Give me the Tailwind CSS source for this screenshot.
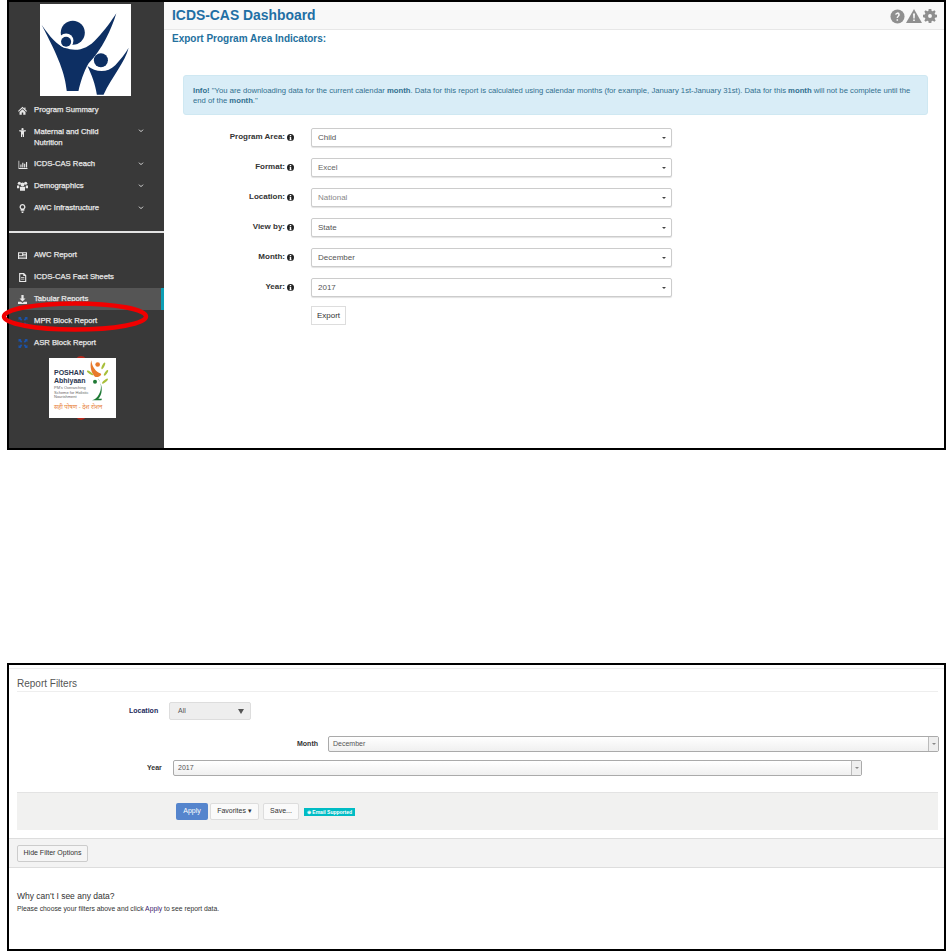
<!DOCTYPE html>
<html lang="en">
<head>
  <meta charset="UTF-8"/>
  <meta name="viewport" content="width=device-width, initial-scale=1.0"/>
  <title>ICDS-CAS Dashboard</title>
  <script src="https://cdn.jsdelivr.net/npm/@tailwindcss/browser@4"></script>
</head>
<body class="bg-white font-['Liberation_Sans',Arial,sans-serif] w-[947px] h-[952px] overflow-hidden">

  <!-- dashboard screenshot -->
  <section class="relative ml-[7px] w-[939px] h-[450px] border-2 border-black flex">
    <aside class="w-[155px] shrink-0 bg-[#393939] text-[#e8e8e8] text-[7.7px] [-webkit-text-stroke:0.25px_#e8e8e8]">
      <div class="mt-[2px] ml-[31px] w-[91px] h-[92px] bg-white">
        <svg viewBox="120 12 272 275" class="w-full h-full" fill="#0d2f63">
          <path d="M125 75C150 110 170 135 195 143C225 155 260 150 290 115C315 90 335 60 348 40C335 85 305 150 265 190C250 215 240 250 235 272L200 272C195 220 175 170 125 75Z"/>
          <circle cx="218" cy="98" r="36"/>
          <circle cx="198" cy="122" r="22" fill="#fff"/>
          <circle cx="198" cy="125" r="15"/>
          <circle cx="302" cy="180" r="21"/>
          <path d="M262 197C285 215 320 220 345 195C360 180 375 160 385 143C375 185 335 230 310 283L290 283C285 250 275 225 262 197Z"/>
        </svg>
      </div>

      <nav class="mt-[3px]">
        <a class="flex items-center h-[22px] pl-[8px]">
          <svg viewBox="0 0 12 12" class="w-[9px] h-[9px] mr-[7px] ml-[1px]" fill="#e8e8e8"><path d="M6 1 0 6.500l1 1L6 3l5 4.500 1-1-2-1.900V2H8.500v1.300zM2 8v3.500h3V8.500h2v3h3V8L6 4.200z"/></svg>
          Program Summary
        </a>
        <a class="flex items-start h-[32px] pl-[8px] pt-[6px] leading-[10.5px] relative">
          <svg viewBox="0 0 12 12" class="w-[9px] h-[9px] mr-[7px] ml-[1px] mt-[1px]" fill="#e8e8e8"><circle cx="6" cy="1.500" r="1.500"/><path d="M1.500 3h9v1.300L8 5v7H6.500V8.500h-1V12H4V5L1.500 4.300z"/></svg>
          <span class="w-[72px]">Maternal and Child Nutrition</span>
          <svg viewBox="0 0 8 6" class="absolute left-[129px] top-[8px] w-[6px] h-[4px]" fill="none" stroke="#ddd" stroke-width="1.500"><path d="m1 1 3 3 3-3"/></svg>
        </a>
        <a class="flex items-center h-[22px] pl-[8px] relative">
          <svg viewBox="0 0 12 12" class="w-[10px] h-[9px] mr-[6px] ml-[1px]" fill="#e8e8e8"><path d="M0 1h1v9.500h11V12H0zM2.500 6H4v4H2.500zM5 3.500h1.500V10H5zM7.500 5H9v5H7.500zM10 2.500h1.500V10H10z"/></svg>
          ICDS-CAS Reach
          <svg viewBox="0 0 8 6" class="absolute left-[129px] top-[9px] w-[6px] h-[4px]" fill="none" stroke="#ddd" stroke-width="1.500"><path d="m1 1 3 3 3-3"/></svg>
        </a>
        <a class="flex items-center h-[22px] pl-[8px] relative">
          <svg viewBox="0 0 14 12" class="w-[11px] h-[10px] mr-[6px]" fill="#e8e8e8"><circle cx="3" cy="2.500" r="2"/><circle cx="11" cy="2.500" r="2"/><circle cx="7" cy="4" r="2.500"/><path d="M0 5.500h2.800L3 9H0zM11.200 5.500H14V9h-3zM3.800 7h6.400v5H3.800z"/></svg>
          Demographics
          <svg viewBox="0 0 8 6" class="absolute left-[129px] top-[9px] w-[6px] h-[4px]" fill="none" stroke="#ddd" stroke-width="1.500"><path d="m1 1 3 3 3-3"/></svg>
        </a>
        <a class="flex items-center h-[22px] pl-[8px] relative">
          <svg viewBox="0 0 12 12" class="w-[9px] h-[9px] mr-[7px] ml-[1px]" fill="#e8e8e8"><path d="M6 0a4 4 0 0 0-2.500 7.100V9h5V7.100A4 4 0 0 0 6 0zm0 1.800a2.200 2.200 0 0 1 1.500 3.800L7 6H5l-.5-.4A2.200 2.200 0 0 1 6 1.800zM4.500 10h3v1l-1 1h-1l-1-1z"/></svg>
          AWC Infrastructure
          <svg viewBox="0 0 8 6" class="absolute left-[129px] top-[9px] w-[6px] h-[4px]" fill="none" stroke="#ddd" stroke-width="1.500"><path d="m1 1 3 3 3-3"/></svg>
        </a>
      </nav>

      <div class="h-[2px] bg-[#e4e4e4] mt-[12px] mb-[11px]"></div>

      <nav>
        <a class="flex items-center h-[22px] pl-[8px]">
          <svg viewBox="0 0 12 12" class="w-[9px] h-[9px] mr-[7px] ml-[1px]" fill="#e8e8e8"><path d="M0 1.500h12v9H0zM1.500 3v2.500h4V3zm5.500 0v1h3.500V3zm0 2v1h3.500V5zM1.500 7v1h9V7zm0 1.800v.7h9v-.7z" fill-rule="evenodd"/></svg>
          AWC Report
        </a>
        <a class="flex items-center h-[22px] pl-[8px]">
          <svg viewBox="0 0 12 12" class="w-[9px] h-[9px] mr-[7px] ml-[1px]" fill="#e8e8e8"><path d="M1.500 0H8l3 3v9H1.500zM3 1.500v9h6.500V4H7V1.500zM4 5.500h4.500v1H4zM4 7.500h4.500v1H4z" fill-rule="evenodd"/></svg>
          ICDS-CAS Fact Sheets
        </a>
        <a class="flex items-center h-[22px] pl-[8px] bg-[#555555] border-r-[3px] border-[#0d9fb5]">
          <svg viewBox="0 0 12 12" class="w-[9px] h-[9px] mr-[7px] ml-[1px]" fill="#e8e8e8"><path d="M4.500 0h3v4.500H10L6 8.500 2 4.500h2.500zM0 9h4l2 1.500L8 9h4v3H0z"/></svg>
          Tabular Reports
        </a>
        <a class="flex items-center h-[22px] pl-[8px]">
          <svg viewBox="0 0 12 12" class="w-[10px] h-[9px] mr-[6px] ml-[1px]" fill="#1b52a8"><path d="M0 0h4L3 1l2 2.500L3.500 5 1 3 0 4zM12 0v4l-1-1-2.500 2L7 3.500 9 1 8 0zM0 12V8l1 1 2.500-2L5 8.500 3 11l1 1zM12 12H8l1-1-2-2.500L8.500 7 11 9l1-1z"/></svg>
          MPR Block Report
        </a>
        <a class="flex items-center h-[22px] pl-[8px]">
          <svg viewBox="0 0 12 12" class="w-[10px] h-[9px] mr-[6px] ml-[1px]" fill="#1b52a8"><path d="M0 0h4L3 1l2 2.500L3.500 5 1 3 0 4zM12 0v4l-1-1-2.500 2L7 3.500 9 1 8 0zM0 12V8l1 1 2.500-2L5 8.500 3 11l1 1zM12 12H8l1-1-2-2.500L8.500 7 11 9l1-1z"/></svg>
          ASR Block Report
        </a>
      </nav>

      <div class="relative ml-[40px] mt-[4px] w-[67px] h-[60px] [-webkit-text-stroke:0]">
        <div class="absolute left-[19px] top-[-2px] w-[26px] h-[64px] rounded-[50%] bg-[#b5281c]"></div>
        <div class="absolute inset-0 bg-white overflow-hidden">
          <p class="absolute left-[5px] top-[11px] text-[7px] leading-[8px] text-[#2a3550] font-bold">POSHAN<br/>Abhiyaan</p>
          <p class="absolute left-[5px] top-[28px] text-[4px] leading-[4.500px] text-[#666] whitespace-nowrap">PM's Overarching<br/>Scheme for Holistic<br/>Nourishment</p>
          <p class="absolute left-[5px] top-[46px] text-[6px] leading-[7px] text-[#e8843c] whitespace-nowrap font-['Noto_Sans','Liberation_Sans',sans-serif]">सही पोषण - देश रोशन</p>
          <svg viewBox="57 24 201 179" class="absolute inset-0 w-full h-full">
            <path d="M184 30C186 50 198 65 212 70C218 73 205 84 195 80C185 70 178 50 184 30Z" fill="#e8792b"/>
            <circle cx="203" cy="43" r="7" fill="#e8792b"/>
            <ellipse cx="220" cy="47" rx="3.500" ry="11" transform="rotate(25 220 47)" fill="#a8bf3a"/>
            <ellipse cx="228" cy="68" rx="3.500" ry="10" transform="rotate(35 228 68)" fill="#a8bf3a"/>
            <ellipse cx="180" cy="68" rx="3.500" ry="11" transform="rotate(-55 180 68)" fill="#a8bf3a"/>
            <ellipse cx="225" cy="93" rx="3.500" ry="11" transform="rotate(50 225 93)" fill="#a8bf3a"/>
            <circle cx="195" cy="95" r="6" fill="#1f7a35"/>
            <path d="M203 84C215 95 216 118 207 132C202 142 195 148 186 150L214 150L216 146L205 146C216 135 222 108 203 84Z" fill="#1f7a35"/>
          </svg>
        </div>
      </div>
    </aside>

    <main class="flex-1 min-w-0 bg-white">
      <header class="h-[28px] bg-[#f8f8f8] border-b border-[#e7e7e7] flex items-center justify-between pl-[8px] pr-[7px]">
        <h1 class="text-[13.9px] font-bold text-[#1f6fa5]">ICDS-CAS Dashboard</h1>
        <div class="flex items-center gap-[1px] pt-[1px]">
          <svg viewBox="0 0 16 16" class="w-[15px] h-[15px]"><circle cx="8" cy="8" r="7.500" fill="#8f8f8f"/><path d="M5.500 6.200A2.500 2.500 0 0 1 10.500 6c0 2-2 2-2 3.700H7C7 7.500 8.800 7.500 8.800 6.100a.9.9 0 0 0-1.700-.2z M7 10.800h1.600v1.700H7z" fill="#f8f8f8"/></svg>
          <svg viewBox="0 0 16 14" class="w-[16px] h-[14px]"><path d="M8 0l8 14H0z" fill="#8f8f8f"/><path d="M7 4.500h2l-.3 5H7.300zM7.200 10.500h1.600V12H7.200z" fill="#f8f8f8"/></svg>
          <svg viewBox="0 0 16 16" class="w-[14px] h-[14px]"><path d="M6.500 0h3l.4 2.200 1.300.5L13 1.500 14.500 3l-1.200 1.900.5 1.300L16 6.500v3l-2.200.4-.5 1.300 1.200 1.800-1.500 1.500-1.800-1.200-1.300.5-.4 2.200h-3l-.4-2.200-1.300-.5L3 14.500 1.500 13l1.200-1.800-.5-1.300L0 9.500v-3l2.200-.3.5-1.300L1.500 3 3 1.500l1.800 1.200 1.300-.5zM8 5.800a2.200 2.200 0 1 0 0 4.400 2.200 2.200 0 0 0 0-4.400z" fill="#8f8f8f" fill-rule="evenodd"/></svg>
        </div>
      </header>

      <h2 class="pl-[8px] mt-[2px] text-[10px] leading-[14px] font-bold text-[#23709e]">Export Program Area Indicators:</h2>

      <div class="ml-[19px] mr-[16px] mt-[29px] h-[40px] px-[9px] pt-[10px] bg-[#d9edf7] border border-[#cfe8f2] rounded-[3px] text-[7.7px] leading-[10px] text-[#31708f]">
        <b>Info!</b> "You are downloading data for the current calendar <b>month</b>. Data for this report is calculated using calendar months (for example, January 1st-January 31st). Data for this <b>month</b> will not be complete until the end of the <b>month</b>."
      </div>

      <form class="mt-[7px] text-[8px]">
        <div class="flex items-center h-[30px]">
          <label class="w-[130px] text-right font-bold text-[#333] flex justify-end items-center gap-[2px]">Program Area: <svg viewBox="0 0 10 10" class="w-[7px] h-[7px]"><circle cx="5" cy="5" r="5" fill="#222"/><path d="M4 1.500h2V3H4zM3.800 4H6v3.800h.6V9H3.500V7.800H4V5.100h-.2z" fill="#fff"/></svg></label>
          <div class="ml-[17px] w-[361px] h-[19px] pt-[1px] bg-white border border-[#ccc] shadow-[0_1px_1px_rgba(0,0,0,0.12)] rounded-[2px] flex items-center justify-between pl-[6px] pr-[5px] text-[#555]">Child<span class="border-x-[2px] border-t-[2px] border-x-transparent border-t-[#444]"></span></div>
        </div>
        <div class="flex items-center h-[30px]">
          <label class="w-[130px] text-right font-bold text-[#333] flex justify-end items-center gap-[2px]">Format: <svg viewBox="0 0 10 10" class="w-[7px] h-[7px]"><circle cx="5" cy="5" r="5" fill="#222"/><path d="M4 1.500h2V3H4zM3.800 4H6v3.800h.6V9H3.500V7.800H4V5.100h-.2z" fill="#fff"/></svg></label>
          <div class="ml-[17px] w-[361px] h-[19px] pt-[1px] bg-white border border-[#ccc] shadow-[0_1px_1px_rgba(0,0,0,0.12)] rounded-[2px] flex items-center justify-between pl-[6px] pr-[5px] text-[#666]">Excel<span class="border-x-[2px] border-t-[2px] border-x-transparent border-t-[#444]"></span></div>
        </div>
        <div class="flex items-center h-[30px]">
          <label class="w-[130px] text-right font-bold text-[#333] flex justify-end items-center gap-[2px]">Location: <svg viewBox="0 0 10 10" class="w-[7px] h-[7px]"><circle cx="5" cy="5" r="5" fill="#222"/><path d="M4 1.500h2V3H4zM3.800 4H6v3.800h.6V9H3.500V7.800H4V5.100h-.2z" fill="#fff"/></svg></label>
          <div class="ml-[17px] w-[361px] h-[19px] pt-[1px] bg-white border border-[#ccc] shadow-[0_1px_1px_rgba(0,0,0,0.12)] rounded-[2px] flex items-center justify-between pl-[6px] pr-[5px] text-[#888]">National<span class="border-x-[2px] border-t-[2px] border-x-transparent border-t-[#444]"></span></div>
        </div>
        <div class="flex items-center h-[30px]">
          <label class="w-[130px] text-right font-bold text-[#333] flex justify-end items-center gap-[2px]">View by: <svg viewBox="0 0 10 10" class="w-[7px] h-[7px]"><circle cx="5" cy="5" r="5" fill="#222"/><path d="M4 1.500h2V3H4zM3.800 4H6v3.800h.6V9H3.500V7.800H4V5.100h-.2z" fill="#fff"/></svg></label>
          <div class="ml-[17px] w-[361px] h-[19px] pt-[1px] bg-white border border-[#ccc] shadow-[0_1px_1px_rgba(0,0,0,0.12)] rounded-[2px] flex items-center justify-between pl-[6px] pr-[5px] text-[#555]">State<span class="border-x-[2px] border-t-[2px] border-x-transparent border-t-[#444]"></span></div>
        </div>
        <div class="flex items-center h-[30px]">
          <label class="w-[130px] text-right font-bold text-[#333] flex justify-end items-center gap-[2px]">Month: <svg viewBox="0 0 10 10" class="w-[7px] h-[7px]"><circle cx="5" cy="5" r="5" fill="#222"/><path d="M4 1.500h2V3H4zM3.800 4H6v3.800h.6V9H3.500V7.800H4V5.100h-.2z" fill="#fff"/></svg></label>
          <div class="ml-[17px] w-[361px] h-[19px] pt-[1px] bg-white border border-[#ccc] shadow-[0_1px_1px_rgba(0,0,0,0.12)] rounded-[2px] flex items-center justify-between pl-[6px] pr-[5px] text-[#555]">December<span class="border-x-[2px] border-t-[2px] border-x-transparent border-t-[#444]"></span></div>
        </div>
        <div class="flex items-center h-[30px]">
          <label class="w-[130px] text-right font-bold text-[#333] flex justify-end items-center gap-[2px]">Year: <svg viewBox="0 0 10 10" class="w-[7px] h-[7px]"><circle cx="5" cy="5" r="5" fill="#222"/><path d="M4 1.500h2V3H4zM3.800 4H6v3.800h.6V9H3.500V7.800H4V5.100h-.2z" fill="#fff"/></svg></label>
          <div class="ml-[17px] w-[361px] h-[19px] pt-[1px] bg-white border border-[#ccc] shadow-[0_1px_1px_rgba(0,0,0,0.12)] rounded-[2px] flex items-center justify-between pl-[6px] pr-[5px] text-[#555]">2017<span class="border-x-[2px] border-t-[2px] border-x-transparent border-t-[#444]"></span></div>
        </div>
        <button type="button" class="ml-[147px] mt-[4px] w-[35px] h-[19px] bg-white border border-[#ddd] text-[8px] text-[#333]">Export</button>
      </form>
    </main>

    <!-- red marker drawn over the menu -->
    <svg class="absolute left-[-9.5px] top-[297px] w-[152px] h-[36px] overflow-visible" viewBox="0 0 152 36" fill="none"><ellipse cx="75" cy="17.500" rx="71" ry="13" stroke="#f00000" stroke-width="4.500"/></svg>
  </section>

  <!-- report filters screenshot -->
  <section class="ml-[7px] mt-[213px] w-[939px] h-[288px] border-2 border-black flex flex-col">
    <div class="mt-[3px] border-t border-[#eee]"></div>
    <div class="ml-[8px] mr-[6px] h-[23px] pt-[8px] border-b border-[#eee] text-[10px] leading-[14px] text-[#555]">Report Filters</div>

    <div class="flex items-center mt-[10px] h-[18px]">
      <label class="ml-[120px] w-[28px] text-[7px] font-bold text-[#1c2a5a] whitespace-nowrap">Location</label>
      <div class="ml-[12px] w-[82px] h-[18px] bg-[#eeeeee] border border-[#ddd] rounded-[2px] flex items-center justify-between pl-[8px] pr-[6px] text-[7px] text-[#555]">All<span class="border-x-[3px] border-t-[5px] border-x-transparent border-t-[#555]"></span></div>
    </div>

    <div class="flex items-center mt-[16px] h-[16px]">
      <label class="ml-[288px] w-[20px] text-[7px] font-bold text-[#333]">Month</label>
      <div class="ml-[11px] w-[611px] h-[16px] border border-[#aaa] rounded-[2px] bg-gradient-to-b from-white to-[#f0f0f0] flex justify-between text-[7px] text-[#555]">
        <span class="pl-[4px] leading-[13px]">December</span>
        <span class="w-[10px] border-l border-[#bbb] bg-[#eee] flex items-center justify-center"><span class="border-x-[2px] border-t-[2px] border-x-transparent border-t-[#888]"></span></span>
      </div>
    </div>

    <div class="flex items-center mt-[8px] h-[16px]">
      <label class="ml-[138px] w-[15px] text-[7px] font-bold text-[#333]">Year</label>
      <div class="ml-[11px] w-[689px] h-[16px] border border-[#aaa] rounded-[2px] bg-gradient-to-b from-white to-[#f0f0f0] flex justify-between text-[7px] text-[#555]">
        <span class="pl-[4px] leading-[13px]">2017</span>
        <span class="w-[10px] border-l border-[#bbb] bg-[#eee] flex items-center justify-center"><span class="border-x-[2px] border-t-[2px] border-x-transparent border-t-[#888]"></span></span>
      </div>
    </div>

    <div class="ml-[8px] mr-[6px] mt-[16px] h-[38px] bg-[#f1f1f0] border-t border-[#e3e3e3] flex items-center pl-[159px] text-[7px]">
      <button type="button" class="w-[32px] h-[17px] bg-[#5585cd] rounded-[2px] text-white">Apply</button>
      <button type="button" class="ml-[2px] w-[49px] h-[17px] bg-[#fafafa] border border-[#ddd] rounded-[2px] text-[#333]">Favorites ▾</button>
      <button type="button" class="ml-[4px] w-[36px] h-[17px] bg-[#fafafa] border border-[#ddd] rounded-[2px] text-[#333]">Save...</button>
      <span class="ml-[5px] w-[51px] h-[8px] bg-[#00bcc4] text-white text-[5px] leading-[8px] text-center font-bold whitespace-nowrap">⊕ Email Supported</span>
    </div>

    <div class="mt-[8px] h-[30px] bg-[#f3f3f3] border-y border-[#ddd] flex items-center pl-[8px]">
      <button type="button" class="w-[71px] h-[17px] bg-[#f5f5f5] border border-[#ccc] rounded-[2px] text-[7px] text-[#333]">Hide Filter Options</button>
    </div>

    <div class="pl-[8px] pt-[22px]">
      <p class="text-[8.5px] leading-[12px] text-[#333]">Why can't I see any data?</p>
      <p class="mt-[2px] text-[6.8px] leading-[9px] text-[#333]">Please choose your filters above and click <span class="text-[#3b1a6e]">Apply</span> to see report data.</p>
    </div>
  </section>

</body>
</html>
